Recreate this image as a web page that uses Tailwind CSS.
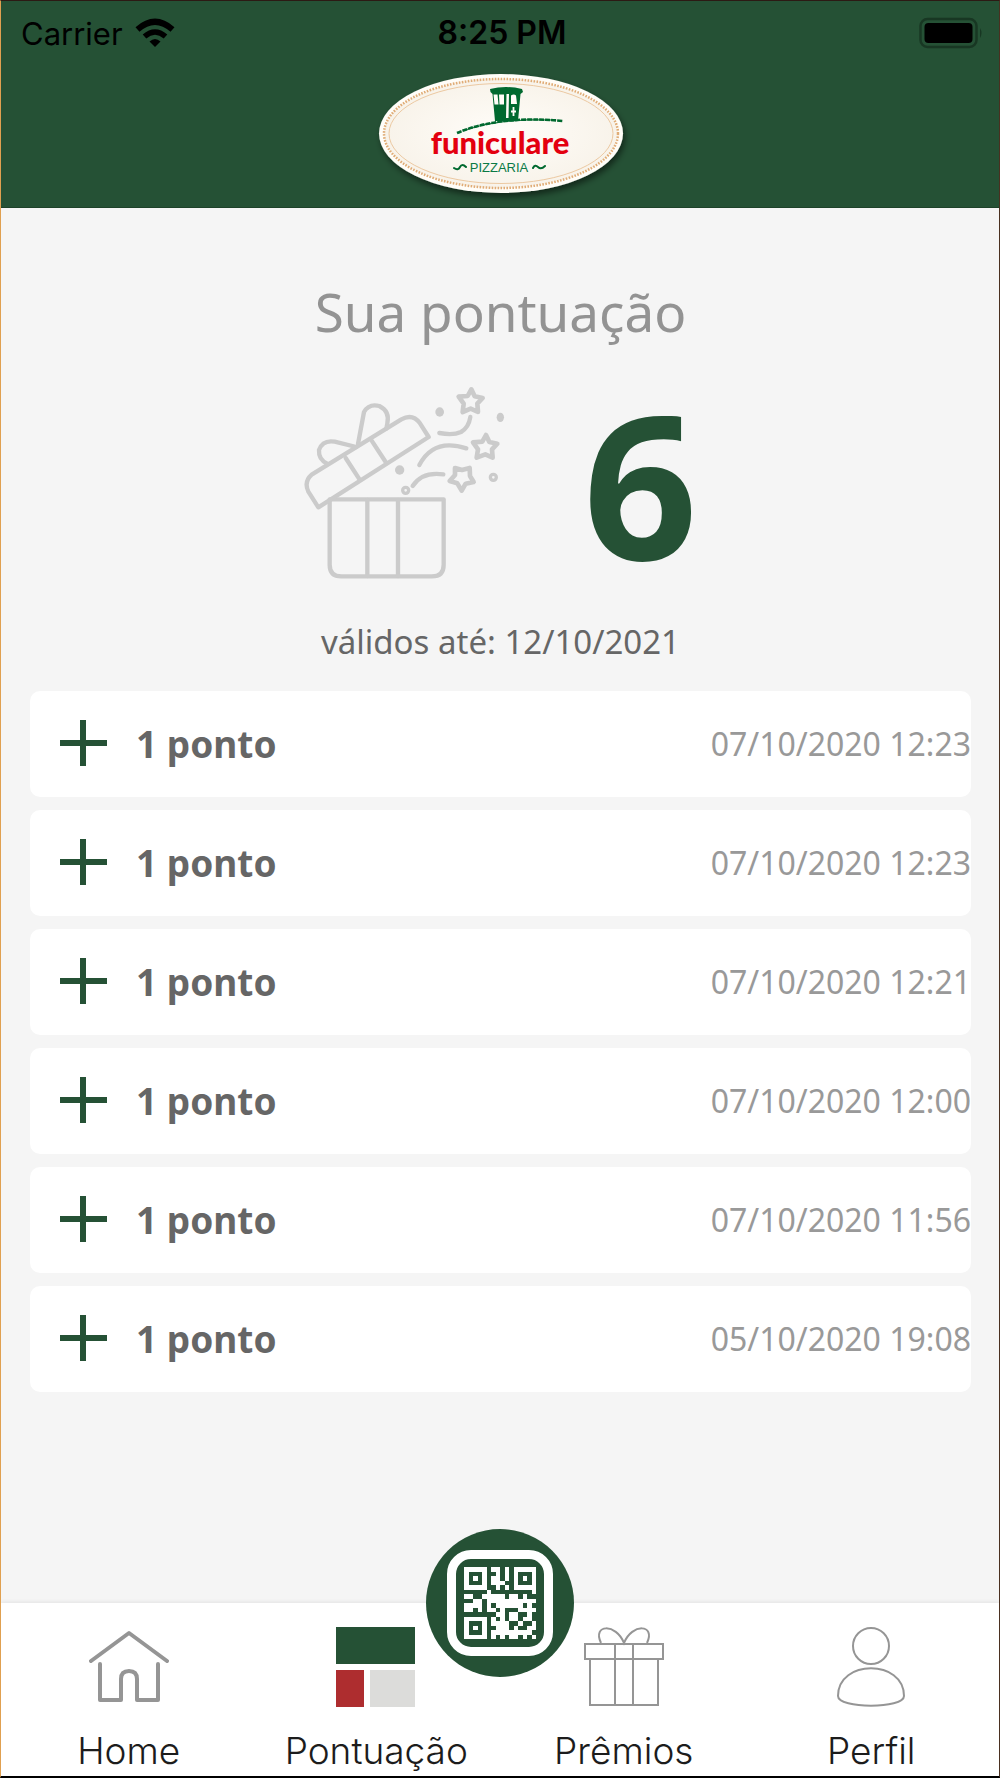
<!DOCTYPE html>
<html lang="pt-BR">
<head>
  <meta charset="UTF-8" />
  <meta name="viewport" content="width=device-width, initial-scale=1.0"/>
  <title>Funiculare Pizzaria | Sua pontuação</title>
  <script src="https://cdn.jsdelivr.net/npm/@tailwindcss/browser@4"></script>
</head>

<body class="min-h-screen flex flex-col bg-[#f5f5f5] border border-b-2 border-t-[#2c1a14] border-r-[#4a3020] border-b-black border-l-[#e0a050] font-['Noto_Sans',sans-serif]">

  <!-- Header -->
  <header class="h-[207px] bg-[#255135] border-b border-[#1d4229] text-black">
    <div class="grid grid-cols-3 items-center h-16 pl-5 pr-4 font-['Inter',sans-serif] text-[31px] leading-none">
      <div class="flex items-center gap-3">
        <span>Carrier</span>
        <svg class="w-10 h-[30px]" viewBox="0 0 40 30" aria-label="Wi-Fi">
          <path d="M20 29 L14.5 23.5 Q20 18.5 25.500 23.500Z"/>
          <path d="M9.500 18.500 Q20 9.500 30.500 18.500" fill="none" stroke="#000" stroke-width="5.500"/>
          <path d="M2.500 11.500 Q20 -4 37.500 11.500" fill="none" stroke="#000" stroke-width="6"/>
        </svg>
      </div>
      <div class="text-center text-[32px] font-semibold">8:25 PM</div>
      <svg class="justify-self-end w-16 h-8" viewBox="0 0 64 32" aria-label="Bateria">
        <rect x="1.500" y="2" width="56" height="28" rx="7" fill="none" stroke="#183723" stroke-width="2.500"/>
        <rect x="5.500" y="6" width="48" height="20" rx="4"/>
        <path d="M61 11 q3 5 0 10z" fill="#183723"/>
      </svg>
    </div>
    <svg class="block mx-auto w-[264px] h-[140px]" viewBox="368 65 264 140" role="img" aria-label="Funiculare Pizzaria">
      <defs>
        <filter id="logoShadow" x="-10%" y="-10%" width="120%" height="130%">
          <feDropShadow dx="2" dy="4" stdDeviation="3" flood-color="#000" flood-opacity=".5"/>
        </filter>
        <radialGradient id="cream"><stop offset="0" stop-color="#fffdf9"/><stop offset="1" stop-color="#f8f3ea"/></radialGradient>
      </defs>
      <ellipse cx="501" cy="133.500" rx="122" ry="59.500" fill="#fffdf8" filter="url(#logoShadow)"/>
      <ellipse cx="501" cy="133.500" rx="117" ry="54.500" fill="url(#cream)" stroke="#e0ac76" stroke-width="2.500" stroke-dasharray="1.600 1.400"/>
      <ellipse cx="501" cy="133.500" rx="112" ry="50" fill="none" stroke="#ecc9a2" stroke-width="1"/>
      <!-- Tram -->
      <path d="M490 89 Q506 85 522 89 L523 92 L520.500 94 L518 121 L495 121 L492.500 94 L490.500 92Z" fill="#00692f"/>
      <path d="M493.500 94.500h4l1 10h-4zM499 94.500h5v10h-4.500zM506.500 94h2.500l-.5 24h-2.500zM511 95.500q3-2 5 0l1 8.500h-6z" fill="#fffdf8"/>
      <path d="M513.500 107v9M511 111.500h5" stroke="#fffdf8" stroke-width="1.800"/>
      <path d="M457 133 Q500 115 563 121" fill="none" stroke="#00692f" stroke-width="2.600" stroke-dasharray="5 1"/>
      <path d="M465 130 Q500 118 552 120" fill="none" stroke="#00692f" stroke-width="1"/>
      <text x="500" y="154" text-anchor="middle" class="font-['Lato',sans-serif] font-black text-[31px]" fill="#e3000f">funiculare</text>
      <text x="499" y="172" text-anchor="middle" class="font-['Liberation_Sans',sans-serif] text-[13px]" fill="#0b7a45">PIZZARIA</text>
      <path d="M454 168q4 3 6-1t6 0M533 168q2-4 5-1t7-1" fill="none" stroke="#00692f" stroke-width="2" stroke-linecap="round"/>
    </svg>
  </header>

  <main class="grow pl-[29px] pr-7 pt-[68px]">
    <!-- Total -->
    <section class="flex flex-col items-center">
      <h1 class="text-[53px] leading-[72px] text-[#939393]">Sua pontuação</h1>
      <div class="flex items-center justify-center gap-[78px] mt-8 h-[206px]">
        <svg class="w-[202px] h-[194px]" viewBox="40 350 606 582" fill="none" stroke="#cbcbcb" stroke-width="13" stroke-linecap="round" stroke-linejoin="round" aria-hidden="true">
          <path d="M120 690H462V886Q462 921 427 921H155Q120 921 120 886Z"/>
          <path d="M233 692V920M325 692V920"/>
          <path d="M86 714L56 667Q42 637 66 616L335 450Q369 432 391 462L417 503Z"/>
          <path d="M168 566L210 631M246 514L288 578"/>
          <path d="M205 524L223 428Q238 402 269 410Q301 426 293 462L290 478"/>
          <path d="M200 533L135 517Q99 511 88 542Q86 571 113 583"/>
          <path d="M449 491Q490 499 514 488Q537 475 542 443M389 587Q432 505 530 537M369 650Q397 606 461 615"/>
          <g stroke-width="14">
            <path d="M545 360L555 381L579 386L563 403L565 428L543 418L519 428L522 403L507 382L534 380Z"/>
            <path d="M589 497L599 518L623 523L607 540L609 565L587 555L561 565L565 540L550 519L578 517Z"/>
            <path d="M496 596L517 602L540 596L541 620L552 638L528 643L516 664L503 642L480 635L496 617Z"/>
          </g>
          <g fill="#cbcbcb" stroke="none">
            <ellipse cx="450" cy="428" rx="13" ry="14"/>
            <ellipse cx="632" cy="444" rx="11" ry="14"/>
            <circle cx="330" cy="602" r="14"/>
          </g>
          <circle cx="611" cy="624" r="9" stroke-width="10"/>
          <circle cx="348" cy="663" r="9" stroke-width="10"/>
        </svg>
        <strong class="text-[200px] leading-[206px] font-bold text-[#255135]">6</strong>
      </div>
      <p class="mt-8 text-[33px] leading-[48px] text-[#666]">válidos até: 12/10/2021</p>
    </section>

    <!-- Extrato -->
    <ul id="extrato" class="mt-[25px] flex flex-col gap-[13px]"></ul>
  </main>

  <!-- Navigation -->
  <nav class="relative mt-8 pb-[3px] bg-white shadow-[0_-1px_4px_rgba(0,0,0,0.08)] font-['Inter',sans-serif] text-[37px] leading-[44px] font-light text-[#1c1c1c]">
    <div class="grid grid-cols-4 px-1 pt-6">
      <a href="#home" class="flex flex-col items-center gap-[22px]">
        <svg class="w-20 h-20" viewBox="0 0 80 80" fill="none" stroke="#959595" stroke-width="4" stroke-linecap="round" stroke-linejoin="round">
          <path d="M2 34L40 6L78 34M11 37V73H32V52Q32 44 40 44T48 52V73H69V37"/>
        </svg>
        Home
      </a>
      <a href="#pontuacao" class="flex flex-col items-center gap-[22px]" aria-current="page">
        <svg class="w-20 h-20" viewBox="0 0 80 80">
          <path d="M0 0h79v37H0z" fill="#255135"/>
          <path d="M0 43h28v37H0z" fill="#ae2d2f"/>
          <path d="M34 43h45v37H34z" fill="#dcdcda"/>
        </svg>
        Pontuação
      </a>
      <a href="#premios" class="flex flex-col items-center gap-[22px]">
        <svg class="w-20 h-20" viewBox="0 0 80 80" fill="none" stroke="#959595" stroke-width="2">
          <path d="M1 17H79V32H1ZM6 32V78H74V32M31 17V78M49 17V78"/>
          <path d="M17 16C8 -3 32 -4 40 16C48 -4 72 -3 63 16"/>
        </svg>
        Prêmios
      </a>
      <a href="#perfil" class="flex flex-col items-center gap-[22px]">
        <svg class="w-20 h-20" viewBox="0 0 80 80" fill="none" stroke="#959595" stroke-width="2">
          <circle cx="40" cy="19" r="18"/>
          <path d="M7 69C7 32 73 32 73 69C73 82 7 82 7 69Z"/>
        </svg>
        Perfil
      </a>
    </div>
    <button type="button" aria-label="Ler QR Code" class="absolute left-1/2 top-0 -translate-x-1/2 -translate-y-1/2 size-[148px] rounded-full bg-[#255135] flex items-center justify-center">
      <span class="size-[106px] rounded-[24px] border-[9px] border-white flex items-center justify-center">
        <svg id="qr" class="size-[72px]" viewBox="0 0 16 16" fill="#fff" shape-rendering="crispEdges"></svg>
      </span>
    </button>
  </nav>

  <script>
    const pontos = [
      '07/10/2020 12:23',
      '07/10/2020 12:23',
      '07/10/2020 12:21',
      '07/10/2020 12:00',
      '07/10/2020 11:56',
      '05/10/2020 19:08',
    ];

    document.getElementById('extrato').innerHTML = pontos.map(data => `
      <li class="flex items-center h-[106px] pl-[30px] bg-white rounded-[10px]">
        <svg class="w-12 h-12" viewBox="0 0 48 48" stroke="#255135" stroke-width="6" aria-hidden="true"><path d="M0 23H47M23 0V46"/></svg>
        <span class="ml-7 text-[37px] leading-[48px] font-bold text-[#666]">1 ponto</span>
        <time class="ml-auto text-[32px] leading-[48px] text-[#999]">${data}</time>
      </li>`).join('');

    // 1 = white module
    const qr = [
      '1111101101011111',
      '1000100101010001',
      '1010101101010101',
      '1000101110010001',
      '1111100101011111',
      '0000010000000001',
      '1100111110110100',
      '0011011111111111',
      '1111010111111010',
      '1101011010001111',
      '0000000110110010',
      '1111101010110110',
      '1000101111001001',
      '1010100111010011',
      '1000101111111110',
      '1111101010110101',
    ];
    document.getElementById('qr').innerHTML = qr.map((row, y) =>
      [...row].map((m, x) => m === '1' ? `<rect x="${x}" y="${y}" width="1" height="1"/>` : '').join('')
    ).join('');
  </script>
</body>
</html>
